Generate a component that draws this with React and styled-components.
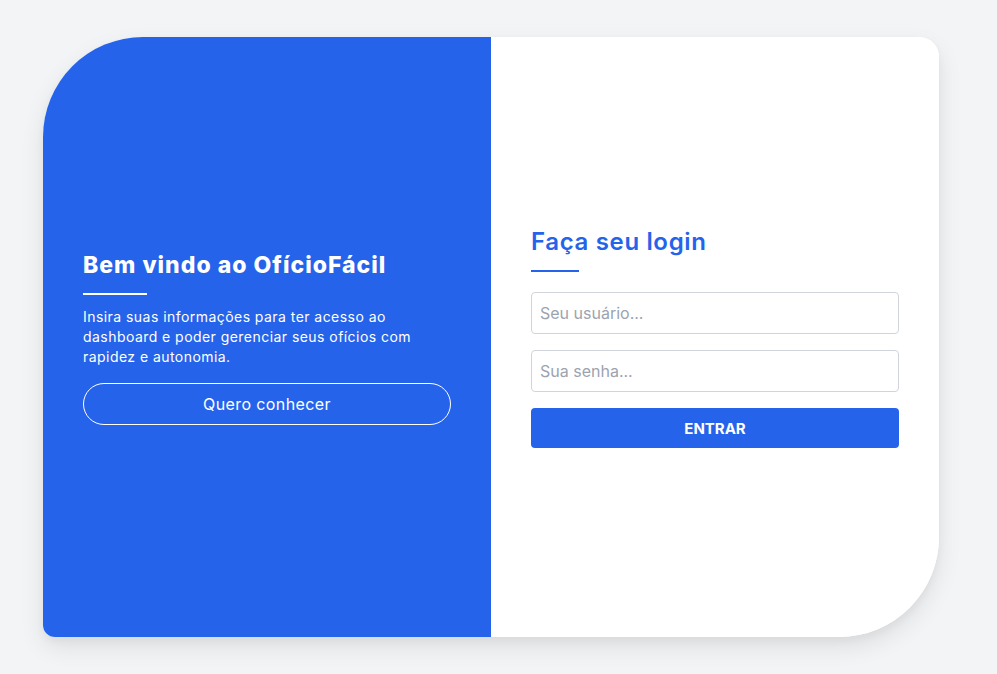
import React from "react";
import styled, { createGlobalStyle } from "styled-components";

const Global = createGlobalStyle`
  html, body { margin: 0; padding: 0; }
  body {
    background: #f3f4f6;
    font-family: "Inter", "Liberation Sans", sans-serif;
  }
  * { box-sizing: border-box; }
`;

const Page = styled.div`
  width: 997px;
  height: 674px;
  padding: 37px 0 0 43px;
`;

const Card = styled.div`
  width: 896px;
  height: 600px;
  display: grid;
  grid-template-columns: 448px 448px;
  border-radius: 100px 20px 100px 12px;
  background: #ffffff;
  box-shadow: 0 10px 25px rgba(0, 0, 0, 0.09), 0 4px 8px rgba(0, 0, 0, 0.04);
  overflow: hidden;
`;

const Panel = styled.div`
  display: flex;
  flex-direction: column;
  justify-content: center;
  padding: 0 40px;
  background: ${(p) => (p.$blue ? "#2563eb" : "#ffffff")};
  color: ${(p) => (p.$blue ? "#ffffff" : "#2563eb")};
`;

const Title = styled.h1`
  margin: 0;
  font-size: ${(p) => p.$size}px;
  font-weight: ${(p) => p.$weight};
  line-height: 32px;
  letter-spacing: ${(p) => p.$ls}px;
`;

const Rule = styled.div`
  width: ${(p) => p.$w}px;
  height: 2px;
  background: currentColor;
  margin: ${(p) => p.$mt}px 0 ${(p) => p.$mb}px;
`;

const Text = styled.p`
  margin: 0 0 16px;
  font-size: 14px;
  line-height: 20px;
  font-weight: 400;
  letter-spacing: 0.45px;
`;

const GhostButton = styled.button`
  height: 42px;
  width: 100%;
  border: 1px solid #ffffff;
  border-radius: 21px;
  background: transparent;
  color: #ffffff;
  font-family: inherit;
  font-size: 16px;
  letter-spacing: 0.4px;
  cursor: pointer;
`;

const Form = styled.form`
  display: flex;
  flex-direction: column;
  gap: 16px;
`;

const Input = styled.input`
  height: 42px;
  width: 100%;
  border: 1px solid #d1d5db;
  border-radius: 4px;
  padding: 0 8px;
  font-family: inherit;
  font-size: 16px;
  color: #374151;
  outline: none;
  &::placeholder { color: #9ca3af; }
`;

const Submit = styled.button`
  height: 40px;
  width: 100%;
  border: none;
  border-radius: 4px;
  background: #2563eb;
  color: #ffffff;
  font-family: inherit;
  font-size: 15px;
  font-weight: 700;
  cursor: pointer;
`;

export default function App() {
  return (
    <>
      <Global />
      <Page>
        <Card>
          <Panel $blue>
            <Title $size={23} $weight={800} $ls={1}>Bem vindo ao OfícioFácil</Title>
            <Rule $w={64} $mt={12} $mb={12} />
            <Text>
              Insira suas informações para ter acesso ao dashboard e poder
              gerenciar seus ofícios com rapidez e autonomia.
            </Text>
            <GhostButton type="button">Quero conhecer</GhostButton>
          </Panel>
          <Panel>
            <Title $size={24} $weight={600} $ls={0.65}>Faça seu login</Title>
            <Rule $w={48} $mt={12} $mb={20} />
            <Form onSubmit={(e) => e.preventDefault()}>
              <Input placeholder="Seu usuário..." />
              <Input type="password" placeholder="Sua senha..." />
              <Submit type="submit">ENTRAR</Submit>
            </Form>
          </Panel>
        </Card>
      </Page>
    </>
  );
}
